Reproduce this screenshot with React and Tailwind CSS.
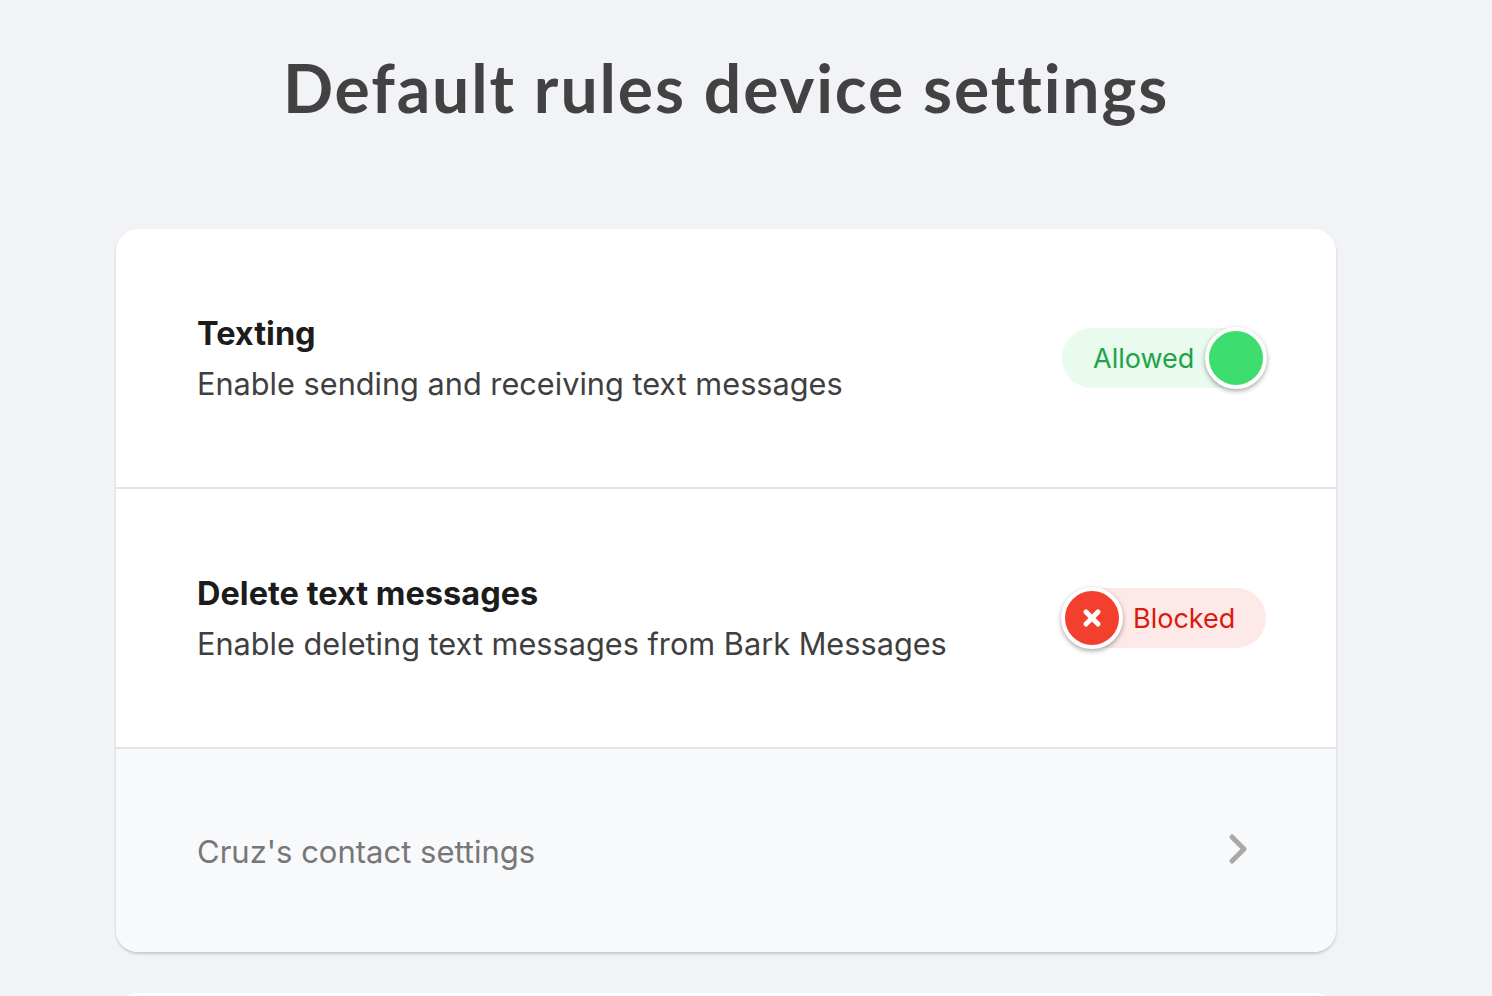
import { X } from "lucide-react";

function AllowedToggle() {
  return (
    <div className="relative flex h-[60px] w-[204px] items-center rounded-full bg-[#e9faef] pl-[31px]">
      <span className="text-[27px] leading-none text-[#1ea444]">Allowed</span>
      <span className="absolute right-[-1px] top-[-1px] h-[62px] w-[62px] rounded-full border-4 border-white bg-[#3ddd6f] shadow-[0_2px_5px_rgba(0,0,0,0.35)]" />
    </div>
  );
}

function BlockedToggle() {
  return (
    <div className="relative flex h-[60px] w-[202px] items-center rounded-full bg-[#fde9e8] pl-[69px]">
      <span className="absolute left-[-3px] top-[-1px] flex h-[62px] w-[62px] items-center justify-center rounded-full border-4 border-white bg-[#f3402e] shadow-[0_2px_5px_rgba(0,0,0,0.35)]">
        <X className="h-[24px] w-[24px] text-white" strokeWidth={5} />
      </span>
      <span className="text-[27px] leading-none text-[#dc1b0b]">Blocked</span>
    </div>
  );
}

function RuleRow({ title, description, children, height }) {
  return (
    <div
      className={
        "flex items-center justify-between border-b-2 border-[#e3e4e7] pl-[81px] pr-[70px] " + height
      }
    >
      <div className="flex flex-col gap-[12px]">
        <h3 className="text-[32.5px] font-bold leading-[40px] text-[#1c1c1c]">{title}</h3>
        <p className="text-[30.7px] leading-[36px] text-[#3f3f3f]">{description}</p>
      </div>
      {children}
    </div>
  );
}

export default function App() {
  return (
    <div
      className="min-h-[996px] overflow-hidden bg-[#f2f3f7] pl-[116px]"
      style={{ fontFamily: "Inter, 'Noto Sans', sans-serif" }}
    >
      <div className="w-[1220px]">
        <h1
          className="pt-[48px] text-center text-[66px] font-bold leading-[80px] tracking-[1.9px] text-[#424242]"
          style={{ fontFamily: "Lato, Inter, sans-serif" }}
        >
          Default rules device settings
        </h1>

        <section className="mt-[101px] overflow-hidden rounded-[22px] bg-white shadow-[0_2px_3px_rgba(0,0,0,0.18)]">
          <RuleRow
            title="Texting"
            description="Enable sending and receiving text messages"
            height="h-[260px]"
          >
            <AllowedToggle />
          </RuleRow>
          <RuleRow
            title="Delete text messages"
            description="Enable deleting text messages from Bark Messages"
            height="h-[260px]"
          >
            <BlockedToggle />
          </RuleRow>
          <div className="flex h-[203px] items-center justify-between bg-[#f8f9fb] pl-[81px] pr-[86px]">
            <span className="pt-[4px] text-[31px] text-[#777777]">Cruz's contact settings</span>
            <svg width="22" height="32" viewBox="0 0 22 32" className="mt-[-4px]">
              <polyline
                points="4,4 16,16 4,28"
                fill="none"
                stroke="#a9a9a9"
                strokeWidth="5"
                strokeLinecap="round"
                strokeLinejoin="round"
              />
            </svg>
          </div>
        </section>

        <div className="mt-[41px] h-[60px] rounded-t-[22px] bg-white" />
      </div>
    </div>
  );
}
